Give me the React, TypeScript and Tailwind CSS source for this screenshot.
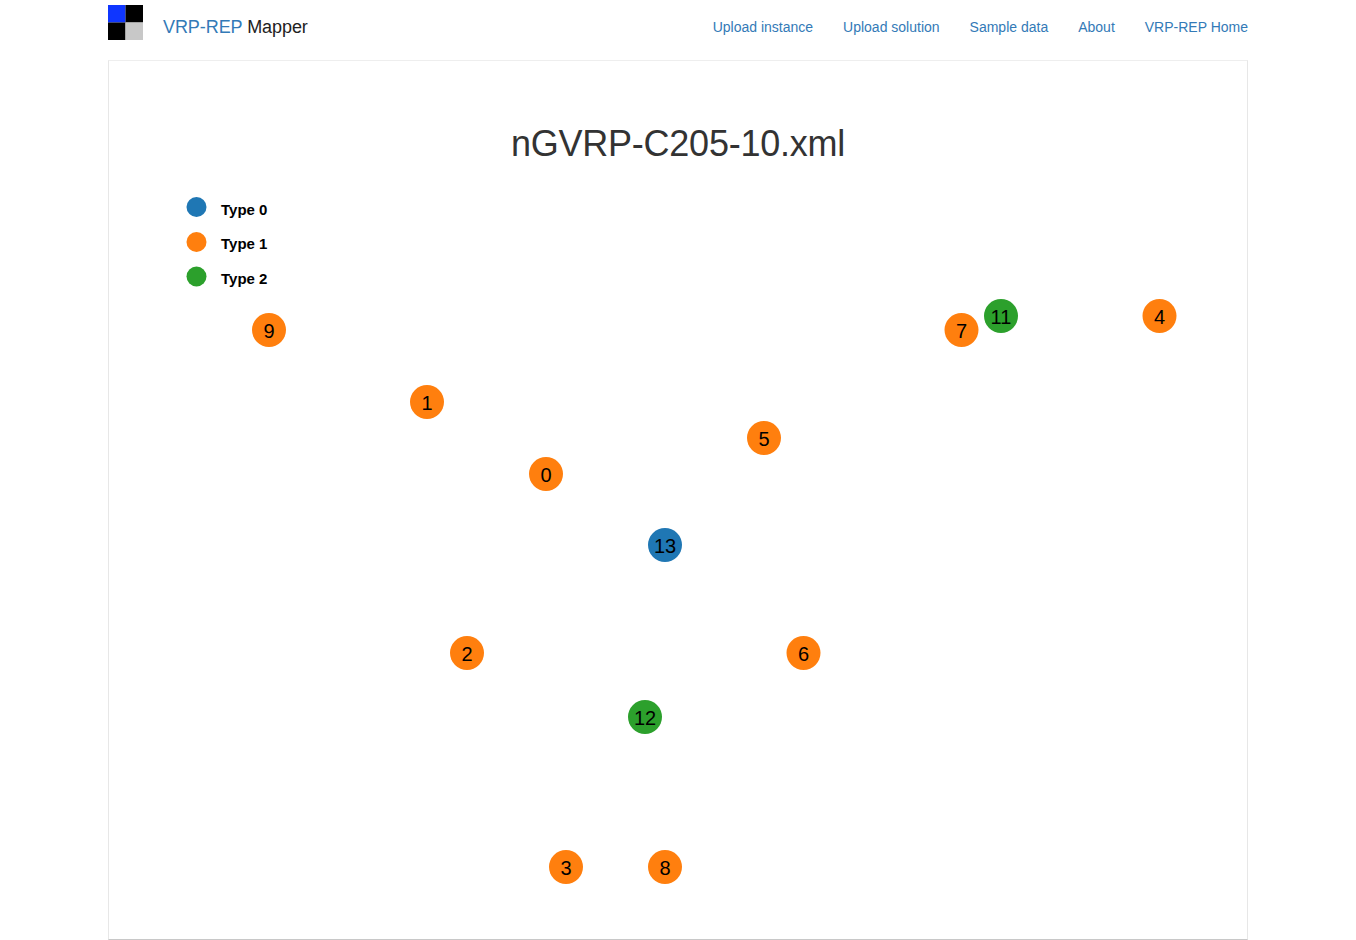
const links = ["Upload instance", "Upload solution", "Sample data", "About", "VRP-REP Home"];

const blue = "#1f77b4";
const orange = "#ff7f0e";
const green = "#2ca02c";

const legend = [
  { label: "Type 0", color: blue, cy: 207, ty: 215 },
  { label: "Type 1", color: orange, cy: 242, ty: 249 },
  { label: "Type 2", color: green, cy: 276.5, ty: 284 },
];

const nodes = [
  { id: 9, x: 269, y: 330, color: orange },
  { id: 1, x: 427, y: 402, color: orange },
  { id: 0, x: 546, y: 474, color: orange },
  { id: 5, x: 764, y: 438, color: orange },
  { id: 7, x: 961.5, y: 330, color: orange },
  { id: 11, x: 1001, y: 316, color: green },
  { id: 4, x: 1159.5, y: 316, color: orange },
  { id: 13, x: 665, y: 545, color: blue },
  { id: 2, x: 467, y: 653, color: orange },
  { id: 6, x: 803.5, y: 653, color: orange },
  { id: 12, x: 645, y: 717, color: green },
  { id: 3, x: 566, y: 867, color: orange },
  { id: 8, x: 665, y: 867, color: orange },
];

const Logo = () => (
  <svg width="35" height="35" viewBox="0 0 35 35" className="block shrink-0">
    <rect x="0" y="0" width="17.5" height="17.5" fill="#0f36ff" />
    <rect x="17.5" y="0" width="17.5" height="17.5" fill="#000000" />
    <rect x="0" y="17.5" width="17.5" height="17.5" fill="#000000" />
    <rect x="17.5" y="17.5" width="17.5" height="17.5" fill="#c8c8c8" />
  </svg>
);

export default function App() {
  return (
    <div className="min-h-[940px] bg-white font-['Liberation_Sans',Arial,sans-serif] text-[#333]">
      <div className="mx-auto w-[1140px]">
        <nav className="flex h-[60px] items-start justify-between">
          <div className="flex items-start pt-[5px]">
            <Logo />
            <div className="ml-5 mt-[11px] text-[18px] leading-[22px] tracking-[-0.07px] text-[#222]">
              <a className="text-[#337ab7]">VRP-REP</a> Mapper
            </div>
          </div>
          <ul className="flex gap-[30px] pt-[17px] text-sm leading-5 text-[#337ab7]">
            {links.map((l) => (
              <li key={l}>
                <a>{l}</a>
              </li>
            ))}
          </ul>
        </nav>

        <div className="h-[880px] border border-x-[#e7e7e7] border-t-[#eeeeee] border-b-[#c8c8c8]">
          <h1 className="pt-[63px] text-center text-4xl leading-10 font-normal tracking-[-0.23px]">
            nGVRP-C205-10.xml
          </h1>
          <svg viewBox="109 164 1138 775" className="block h-[775px] w-[1138px]">
            {legend.map((l) => (
              <g key={l.label}>
                <circle cx="196.5" cy={l.cy} r="10" fill={l.color} />
                <text x="221" y={l.ty} fontSize="15" fontWeight="700" fill="#000">
                  {l.label}
                </text>
              </g>
            ))}
            {nodes.map((n) => (
              <g key={n.id}>
                <circle cx={n.x} cy={n.y} r="17" fill={n.color} />
                <text x={n.x} y={n.y + 7.5} fontSize="20" textAnchor="middle" fill="#000">
                  {n.id}
                </text>
              </g>
            ))}
          </svg>
        </div>
      </div>
    </div>
  );
}
